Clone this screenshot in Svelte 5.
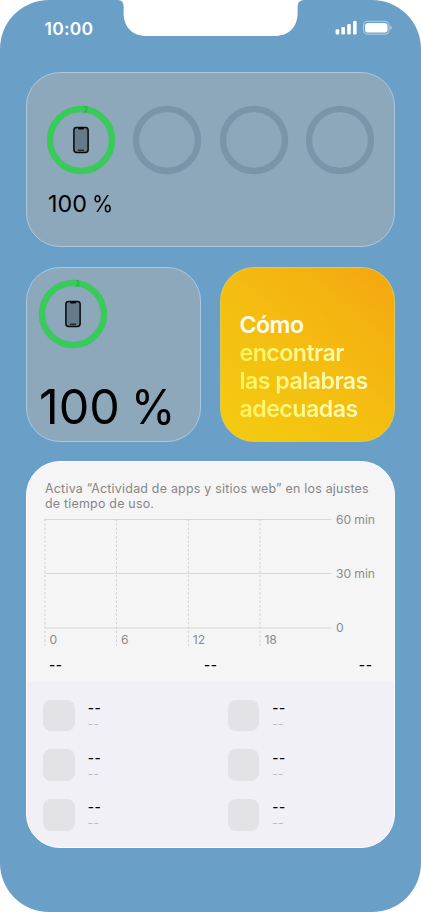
<script lang="ts">
interface AppUsage { name: string; time: string; }

const batterySlots = [100, null, null, null];

const headline = [
  { text: 'Cómo', plain: true },
  { text: 'encontrar', plain: false },
  { text: 'las palabras', plain: false },
  { text: 'adecuadas', plain: false },
];

const gridRows = [
  { y: 6.5, label: '60 min' },
  { y: 60.5, label: '30 min' },
  { y: 115, label: '0' },
];
const gridCols = [
  { x: 0, label: '0' },
  { x: 71.5, label: '6' },
  { x: 143.3, label: '12' },
  { x: 215, label: '18' },
];

const totals = ['--', '--', '--'];
const apps: AppUsage[] = Array.from({ length: 6 }, () => ({ name: '--', time: '--' }));
</script>

{#snippet ring(level: number | null)}
  <svg class="ring" width="70" height="70" viewBox="0 0 70 70" aria-hidden="true">
    <circle cx="35" cy="35" r="31" fill="none" stroke={level === null ? '#7b94a9' : '#3ac95b'} stroke-width="6.5" />
    {#if level !== null}
      <path d="M36.5 4.05A31 31 0 0 1 42.5 4.95" fill="none" stroke="url(#ring-tip)" stroke-width="6.5" />
      <circle cx="36" cy="4" r="3.25" fill="#3ac95b" />
      <rect x="27.9" y="22.6" width="14.2" height="24.8" rx="2.7" fill="#667b8a" stroke="#050708" stroke-width="1.5" />
      <path d="M32.1 22.5h5.8v.9q0 1.2-1.3 1.2h-3.2q-1.3 0-1.3-1.2z" fill="#050708" />
      <path d="M32.3 45.2h5.4" stroke="#050708" stroke-width="1" stroke-linecap="round" />
    {/if}
  </svg>
{/snippet}

<svg class="defs" width="0" height="0" aria-hidden="true">
  <defs>
    <linearGradient id="ring-tip" gradientUnits="userSpaceOnUse" x1="38" y1="0" x2="42.5" y2="0">
      <stop offset="0" stop-color="#2ba64d" />
      <stop offset="1" stop-color="#3ac95b" />
    </linearGradient>
  </defs>
</svg>

<main class="screen">
  <svg class="notch" width="186" height="36" viewBox="0 0 186 36" aria-hidden="true">
    <path d="M0 0Q5.6 .4 5.6 6V13C5.6 27 14.6 36 28.6 36H156.6C170.6 36 179.6 27 179.6 13V6Q179.6 .4 186 0Z" fill="#fff" />
  </svg>

  <header class="status">
    <span class="clock">10:00</span>
    <svg width="60" height="16" viewBox="0 0 60 16" fill="#fff" aria-hidden="true">
      <rect x="0.6" y="9.3" width="3.6" height="5.3" rx="1" />
      <rect x="6.4" y="6.9" width="3.6" height="7.7" rx="1" />
      <rect x="12.2" y="4" width="3.6" height="10.6" rx="1" />
      <rect x="18" y="1" width="3.6" height="13.6" rx="1" />
      <rect x="28.6" y="1.3" width="25.4" height="12.9" rx="4.1" fill="none" stroke="#fff" stroke-opacity=".5" />
      <rect x="30.1" y="2.9" width="22.4" height="9.7" rx="2.8" />
      <path d="M55.3 5.6q1.5.6 1.5 2.2t-1.5 2.2z" fill-opacity=".5" />
    </svg>
  </header>

  <section class="card glass batteries">
    <div class="slots">
      {#each batterySlots as level}
        {@render ring(level)}
      {/each}
    </div>
    <span class="percent">100 <span class="sign">%</span></span>
  </section>

  <div class="pair">
    <section class="card glass battery">
      {@render ring(100)}
      <span class="percent-big">100 <span class="sign">%</span></span>
    </section>

    <section class="card tip">
      {#each headline as line}
        <span class={line.plain ? 'plain' : 'glow'}>{line.text}</span>
      {/each}
    </section>
  </div>

  <section class="card usage">
    <div class="summary">
      <p class="note">Activa “Actividad de apps y sitios web” en los ajustes<br />de tiempo de uso.</p>
      <svg class="chart" width="336" height="136" viewBox="0 0 336 136">
        {#each gridRows as row}
          <line x1="0" x2="286.5" y1={row.y} y2={row.y} class="rule" />
          <text x="291" y={row.y + 4.4}>{row.label}</text>
        {/each}
        {#each gridCols as col}
          <line x1={col.x} x2={col.x} y1="6" y2="134" class="dash" />
          <text x={col.x + 4.5} y="130.8">{col.label}</text>
        {/each}
      </svg>
      <div class="totals">
        {#each totals as total}
          <span>{total}</span>
        {/each}
      </div>
    </div>

    <div class="apps">
      {#each apps as app}
        <div class="app">
          <span class="icon"></span>
          <div class="labels">
            <span class="name">{app.name}</span>
            <span class="time">{app.time}</span>
          </div>
        </div>
      {/each}
    </div>
  </section>
</main>

<style>
:global(body) { background: #fff; }
.defs { position: absolute; }
.screen { position: relative; box-sizing: border-box; width: 421px; height: 912px; padding: 0 26px; border-radius: 49px; overflow: hidden; background: #6aa0c8; font-family: Inter, 'Liberation Sans', sans-serif; color: #000; }
.notch { position: absolute; top: 0; left: 118px; }
.status { display: flex; justify-content: space-between; height: 52px; padding: 20px 0 0 18.5px; box-sizing: border-box; margin-bottom: 20px; }
.clock { color: #fff; font-size: 17.5px; line-height: 17px; font-weight: 600; letter-spacing: 0.25px; }
.status svg { margin-right: 0.5px; }

.card { box-sizing: border-box; border-radius: 34px; overflow: hidden; }
.glass { background: #8da8bb; border: 1px solid #a9c8e0; }
.batteries { height: 175px; padding: 32px 18px 0; }
.slots { display: flex; justify-content: space-between; margin: 0 0.5px; }
.ring { display: block; }
.percent { display: block; margin: 15px 0 0 3px; font-size: 23.3px; line-height: 28px; word-spacing: -1.2px; }
.sign { display: inline-block; transform: scaleX(0.93); transform-origin: left; }

.pair { display: flex; justify-content: space-between; margin: 20px 0 19px; }
.pair .card { width: 175px; height: 175px; }
.battery { padding: 11px 11px 0; }
.percent-big { display: block; margin: 29px 0 0 1px; font-size: 48.5px; line-height: 58px; word-spacing: -3px; white-space: nowrap; }
.tip { display: flex; flex-direction: column; align-items: flex-start; padding: 43px 0 0 18.5px; border: 1px solid #dacb50; background: linear-gradient(40deg, #f3c912 10%, #f4bd10 50%, #f5a810 95%); background-origin: border-box; font-size: 23.2px; line-height: 28.1px; font-weight: 600; letter-spacing: -0.55px; }
.plain { color: #fffdf0; }
.glow { color: transparent; background: linear-gradient(90deg, #fff45c 0, #fff9a0 80px, #fffcc8 130px); background-clip: text; -webkit-background-clip: text; }

.usage { height: 387px; border: 1px solid #fdfdff; background: #f1f0f6; }
.summary { box-sizing: border-box; height: 220px; padding: 18.5px 18px 0; background: #f5f5f5; }
.note { margin: 0; color: #858587; font-size: 12.4px; line-height: 15.2px; letter-spacing: 0.24px; white-space: nowrap; }
.chart { display: block; margin-top: 2px; overflow: visible; }
.chart text { font-size: 12.2px; letter-spacing: -0.1px; fill: #8b8b8d; }
.rule { stroke: #d8d8d9; stroke-width: 1; }
.dash { stroke: #d0d0d1; stroke-width: 1; stroke-dasharray: 2.3 2; }
.totals { display: flex; justify-content: space-between; padding: 0 3.5px 0 4px; margin-top: 8px; font-size: 13.5px; line-height: 16px; font-weight: 500; letter-spacing: 0.6px; }

.apps { display: grid; grid-template-columns: 184.5px 1fr; row-gap: 18px; padding: 17.5px 0 0 16px; }
.app { display: flex; height: 31.7px; }
.icon { width: 31.7px; height: 31.7px; border-radius: 8px; background: #e3e2e7; }
.labels { display: flex; flex-direction: column; margin: 0.5px 0 0 13px; }
.name { font-size: 13.5px; line-height: 16px; font-weight: 500; letter-spacing: 0.6px; }
.time { font-size: 11.8px; line-height: 16px; color: #b9b9be; letter-spacing: 0.5px; }
</style>
